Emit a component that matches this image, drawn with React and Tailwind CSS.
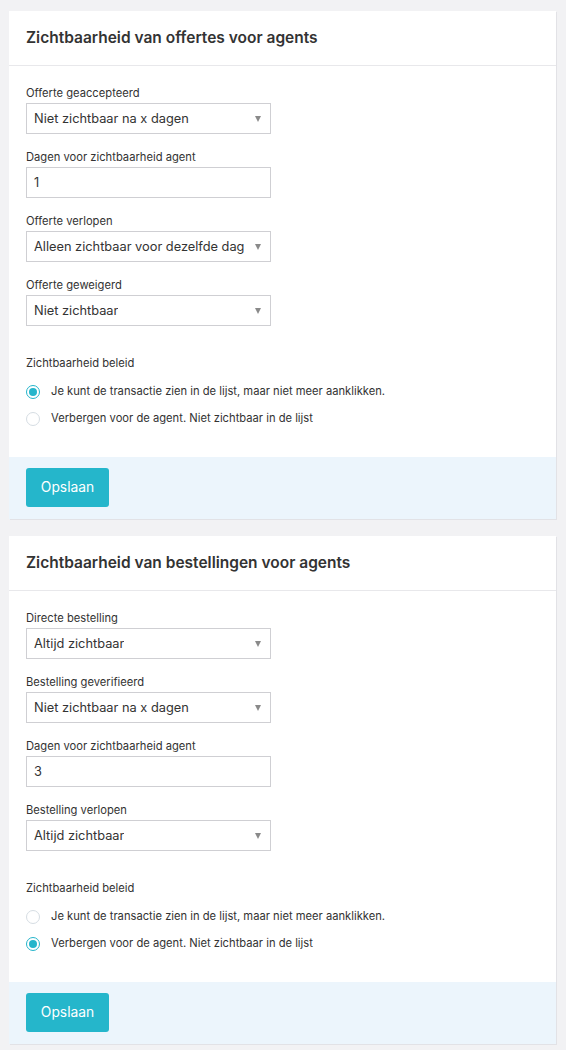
import React from "react";

const SelectBox = ({ value }) => (
  <div className="flex h-[31px] w-[245px] items-center justify-between border border-[#cfcfd3] bg-white pl-[7px] pr-[9px] text-[12.8px] text-[#333]">
    <span className="overflow-hidden whitespace-nowrap">{value}</span>
    <span className="ml-2 h-0 w-0 shrink-0 border-x-[3.5px] border-t-[6px] border-x-transparent border-t-[#8a8a8a]" />
  </div>
);

const InputBox = ({ value }) => (
  <div className="flex h-[31px] w-[245px] items-center border border-[#cfcfd3] bg-white pl-[7px] text-[12.8px] text-[#333]">
    {value}
  </div>
);

const Field = ({ label, children }) => (
  <div className="mb-[13px]">
    <div className="text-[11.2px] leading-[20px] text-[#333]">{label}</div>
    {children}
  </div>
);

const Radio = ({ checked, label }) => (
  <div className="flex h-[27px] items-center gap-[11px]">
    {checked ? (
      <span className="flex h-[14px] w-[14px] items-center justify-center rounded-full border-[1.5px] border-[#25b5cb] bg-white">
        <span className="h-[8px] w-[8px] rounded-full bg-[#25b5cb]" />
      </span>
    ) : (
      <span className="h-[14px] w-[14px] rounded-full border border-[#d6dde3] bg-white" />
    )}
    <span className="text-[11.2px] text-[#333]">{label}</span>
  </div>
);

const Card = ({ title, fields, policy }) => (
  <div className="w-[547px] bg-white shadow-[1px_1px_0_#e2e2e6]">
    <div className="flex h-[55px] items-center border-b border-[#e8e8eb] px-[17px]">
      <h2 className="text-[15.5px] font-semibold text-[#333]">{title}</h2>
    </div>
    <div className="px-[17px] pt-[17px] pb-[25px]">
      {fields.map((f) =>
        f.input ? (
          <Field key={f.label} label={f.label}>
            <InputBox value={f.value} />
          </Field>
        ) : (
          <Field key={f.label} label={f.label}>
            <SelectBox value={f.value} />
          </Field>
        )
      )}
      <div className="mt-[28px] mb-[6px] text-[11.2px] leading-[18px] text-[#333]">Zichtbaarheid beleid</div>
      <Radio checked={policy === 0} label="Je kunt de transactie zien in de lijst, maar niet meer aanklikken." />
      <Radio checked={policy === 1} label="Verbergen voor de agent. Niet zichtbaar in de lijst" />
    </div>
    <div className="bg-[#ecf5fc] px-[17px] pt-[11px] pb-[12px]">
      <button className="h-[39px] w-[83px] rounded-[3px] bg-[#25b6cb] text-[13.8px] text-white">Opslaan</button>
    </div>
  </div>
);

const App = () => {
  return (
    <div className="min-h-[1050px] bg-[#f2f2f4] px-[9px] pt-[11px] pb-[6px] font-['Inter',sans-serif]">
      <div className="flex flex-col gap-[17px]">
        <Card
          title="Zichtbaarheid van offertes voor agents"
          policy={0}
          fields={[
            { label: "Offerte geaccepteerd", value: "Niet zichtbaar na x dagen" },
            { label: "Dagen voor zichtbaarheid agent", value: "1", input: true },
            { label: "Offerte verlopen", value: "Alleen zichtbaar voor dezelfde dag" },
            { label: "Offerte geweigerd", value: "Niet zichtbaar" },
          ]}
        />
        <Card
          title="Zichtbaarheid van bestellingen voor agents"
          policy={1}
          fields={[
            { label: "Directe bestelling", value: "Altijd zichtbaar" },
            { label: "Bestelling geverifieerd", value: "Niet zichtbaar na x dagen" },
            { label: "Dagen voor zichtbaarheid agent", value: "3", input: true },
            { label: "Bestelling verlopen", value: "Altijd zichtbaar" },
          ]}
        />
      </div>
    </div>
  );
};

export default App;
